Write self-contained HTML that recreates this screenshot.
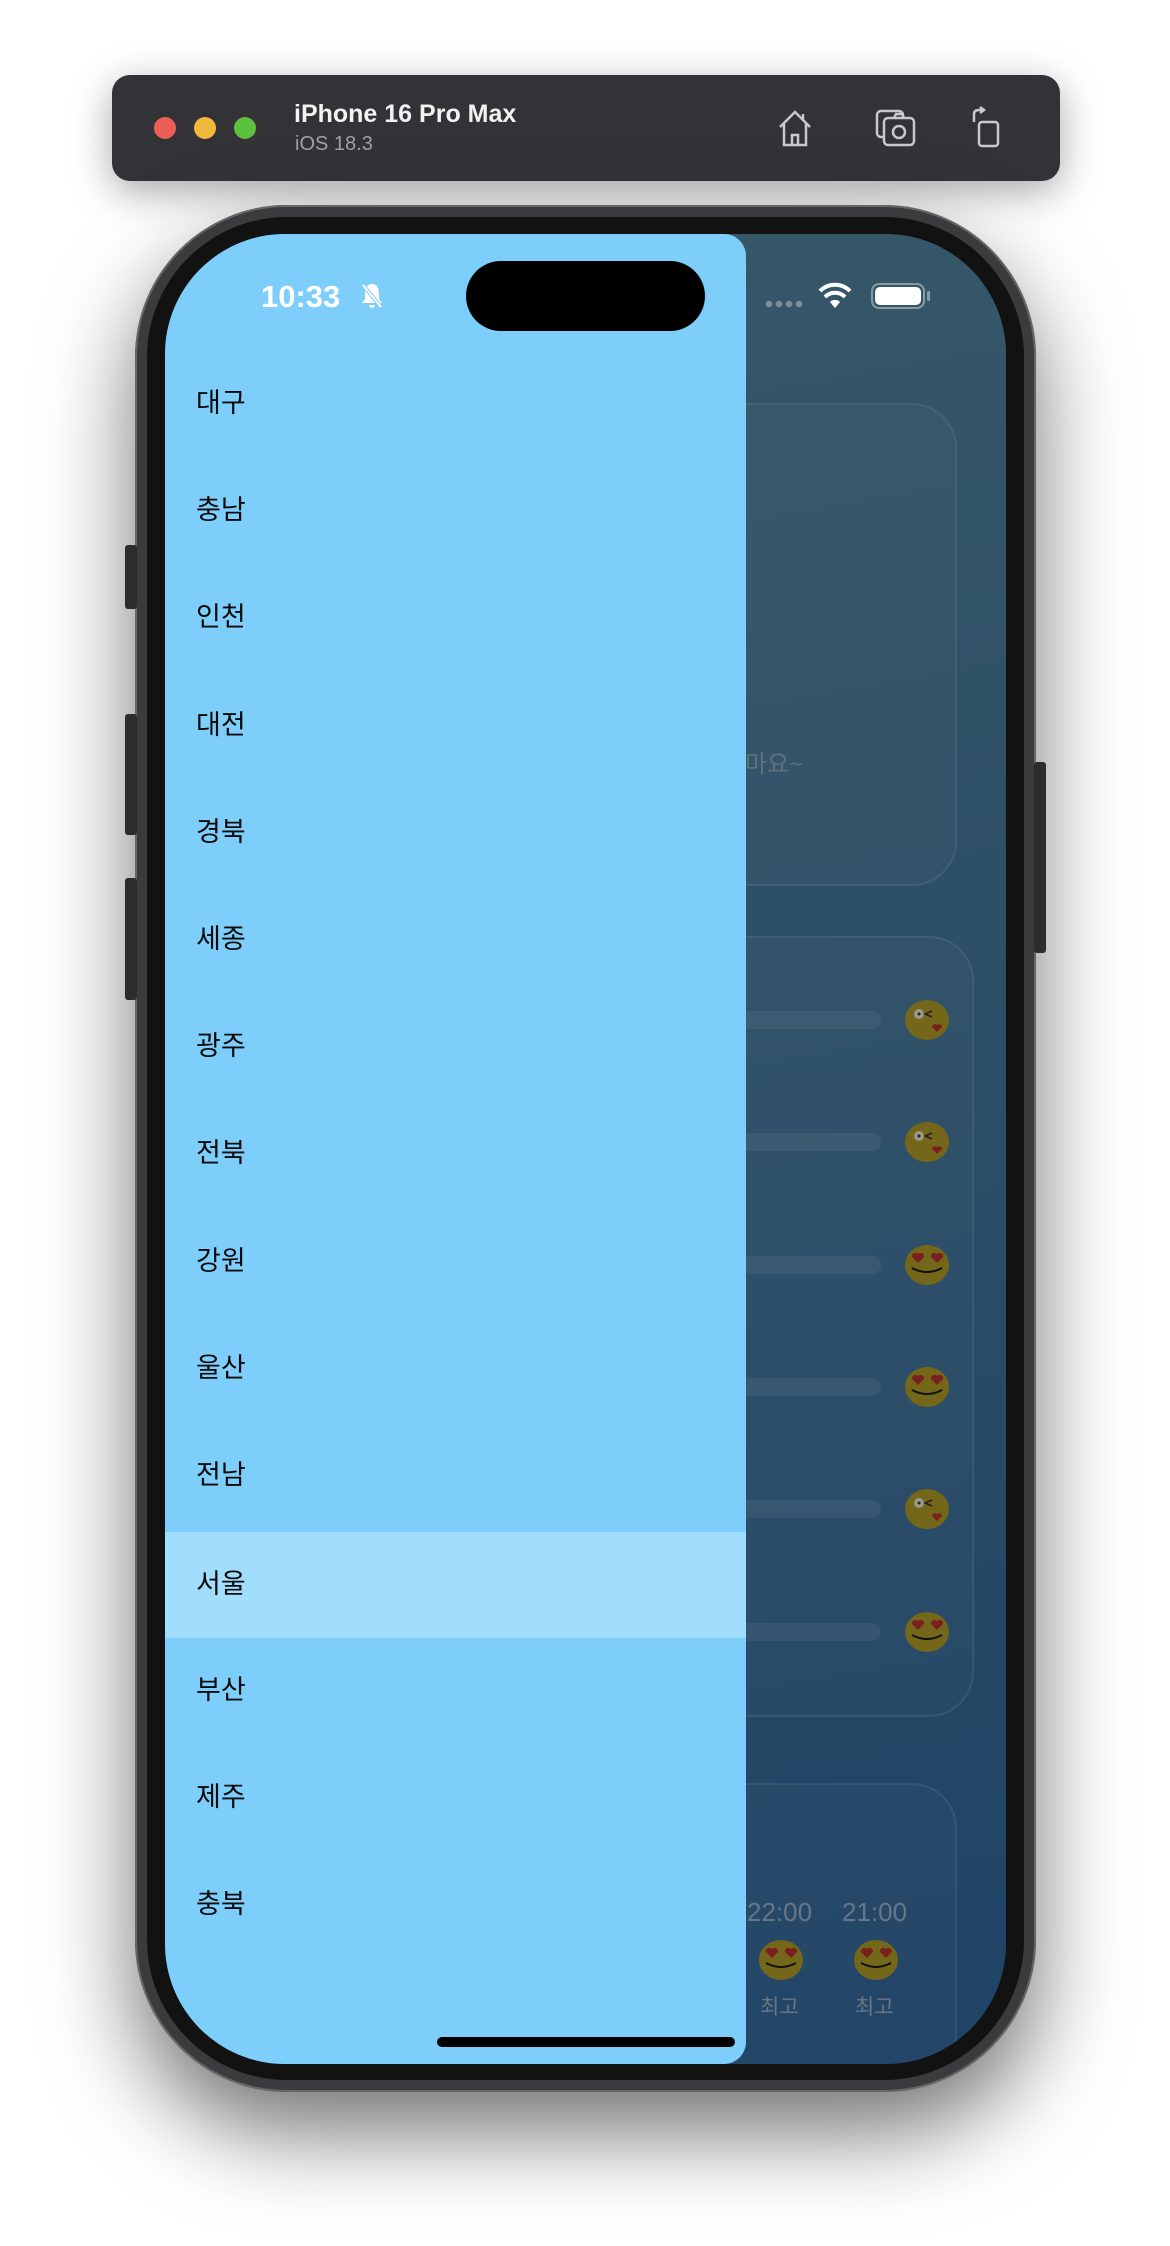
<!DOCTYPE html>
<html><head><meta charset="utf-8"><style>
*{margin:0;padding:0;box-sizing:border-box}
body{width:1170px;height:2246px;background:#fff;position:relative;overflow:hidden;font-family:"Liberation Sans","Noto Sans CJK KR",sans-serif}
.bar{position:absolute;left:112px;top:75px;width:948px;height:106px;background:#333237;border-radius:18px;box-shadow:0 10px 40px rgba(0,0,0,.35)}
.dot{position:absolute;top:117px;width:22px;height:22px;border-radius:50%}
.phone{position:absolute;left:135px;top:205px;width:901px;height:1887px;border-radius:152px;background:#3b3b3d;box-shadow:0 40px 90px rgba(0,0,0,.55),0 0 0 2px #666 inset}
.bezel{position:absolute;left:147px;top:217px;width:877px;height:1863px;border-radius:140px;background:#121212}
.screen{position:absolute;left:165px;top:234px;width:841px;height:1830px;border-radius:120px;overflow:hidden;background:linear-gradient(170deg,#375869 0%,#2c4e66 50%,#1f4366 100%)}
.card{position:absolute;border:2px solid rgba(255,255,255,.07);background:rgba(255,255,255,.02);border-radius:45px}
.drawer{position:absolute;left:0;top:0;width:581px;height:1830px;background:#7ecefb;border-radius:0 22px 22px 0}
.item{position:absolute;left:31px;font-size:27px;color:#0a0a0a;height:107px;line-height:107px;width:581px}
.bb{position:absolute;left:420px;width:296px;height:18px;border-radius:9px;background:rgba(255,255,255,.06)}
.g{position:absolute;color:#677784;font-size:26px}
.btn{position:absolute;background:#2c2c2e;border-radius:3px}
</style></head><body>
<div class="bar"></div>
<div class="dot" style="left:154px;background:#ec5f57"></div>
<div class="dot" style="left:194px;background:#f2b83b"></div>
<div class="dot" style="left:234px;background:#5bc13f"></div>
<div style="position:absolute;left:294px;top:100px;color:#f2f2f2;font-weight:bold;font-size:25px">iPhone 16 Pro Max</div>
<div style="position:absolute;left:295px;top:133px;color:#a0a0a4;font-size:20px">iOS 18.3</div>
<svg style="position:absolute;left:777px;top:108px" width="36" height="40" viewBox="0 0 36 40" fill="none" stroke="#c9c9cc" stroke-width="2.5"><path d="M3 19 L18 4 L33 19 M7 15 V37 H29 V15 M15 37 V27 H21 V37 M26 6 V12"/></svg>
<svg style="position:absolute;left:875px;top:108px" width="42" height="40" viewBox="0 0 42 40" fill="none" stroke="#c9c9cc" stroke-width="2.5"><rect x="2" y="3" width="26" height="26" rx="4"/><rect x="9" y="10" width="30" height="27" rx="4" fill="#333237"/><circle cx="24" cy="24" r="6"/><path d="M19 10 l2-4 h6 l2 4"/></svg>
<svg style="position:absolute;left:970px;top:106px" width="32" height="42" viewBox="0 0 32 42" fill="none" stroke="#c9c9cc" stroke-width="2.5"><rect x="9" y="16" width="19" height="24" rx="3"/><path d="M4 16 V8 Q4 4 9 4 H13 M10 1 l4 3 -4 3"/></svg>

<div class="phone"></div>
<div class="btn" style="left:125px;top:545px;width:12px;height:64px"></div>
<div class="btn" style="left:125px;top:714px;width:12px;height:121px"></div>
<div class="btn" style="left:125px;top:878px;width:12px;height:122px"></div>
<div class="btn" style="left:1034px;top:762px;width:12px;height:191px"></div>
<div class="bezel"></div>
<div class="screen">
  <div class="card" style="left:380px;top:169px;width:412px;height:483px"></div>
  <div class="g" style="left:580px;top:510px;font-size:24px;color:#5f717d">마요~</div>
  <div class="card" style="left:380px;top:702px;width:429px;height:781px"></div>
  <div class="bb" style="top:777px"></div>
  <div class="bb" style="top:899px"></div>
  <div class="bb" style="top:1022px"></div>
  <div class="bb" style="top:1144px"></div>
  <div class="bb" style="top:1266px"></div>
  <div class="bb" style="top:1389px"></div>
  <div class="card" style="left:380px;top:1549px;width:412px;height:400px"></div>
  <div class="g" style="left:582px;top:1663px">22:00</div>
  <div class="g" style="left:677px;top:1663px">21:00</div>
  <div class="g" style="left:595px;top:1757px;font-size:21px">최고</div>
  <div class="g" style="left:690px;top:1757px;font-size:21px">최고</div>
  <svg width="841" height="1830" style="position:absolute;left:0;top:0">
    <defs>
      <g id="k"><ellipse cx="0" cy="0" rx="22" ry="20" fill="#746719"/><circle cx="-8" cy="-6" r="5" fill="#9a9a8a"/><circle cx="-8" cy="-6" r="1.5" fill="#222"/><path d="M5-9 l-7 3 7 3" stroke="#222" stroke-width="1.5" fill="none"/><path d="M10 12 l-5-5 a3 3 0 0 1 5-2 a3 3 0 0 1 5 2z" fill="#7a2020"/></g>
      <g id="h"><ellipse cx="0" cy="0" rx="22" ry="20" fill="#746719"/><path d="M-9 -2 l-6-6 a3.5 3.5 0 0 1 6-3 a3.5 3.5 0 0 1 6 3z M10 -2 l-6-6 a3.5 3.5 0 0 1 6-3 a3.5 3.5 0 0 1 6 3z" fill="#7a2020"/><path d="M-15 3 Q0 11 15 3" stroke="#111" stroke-width="2" fill="none"/></g>
    </defs>
    <use href="#k" x="762" y="786"/><use href="#k" x="762" y="908"/>
    <use href="#h" x="762" y="1031"/><use href="#h" x="762" y="1153"/>
    <use href="#k" x="762" y="1275"/><use href="#h" x="762" y="1398"/>
    <use href="#h" x="616" y="1726"/><use href="#h" x="711" y="1726"/>
  </svg>
  <div class="drawer">
    <div style="position:absolute;left:0;top:1298px;width:581px;height:106px;background:#a1ddfc"></div>
    <div class="item" style="top:116px">대구</div>
    <div class="item" style="top:223px">충남</div>
    <div class="item" style="top:330px">인천</div>
    <div class="item" style="top:438px">대전</div>
    <div class="item" style="top:545px">경북</div>
    <div class="item" style="top:652px">세종</div>
    <div class="item" style="top:759px">광주</div>
    <div class="item" style="top:866px">전북</div>
    <div class="item" style="top:974px">강원</div>
    <div class="item" style="top:1081px">울산</div>
    <div class="item" style="top:1188px">전남</div>
    <div class="item" style="top:1297px">서울</div>
    <div class="item" style="top:1403px">부산</div>
    <div class="item" style="top:1510px">제주</div>
    <div class="item" style="top:1617px">충북</div>
  </div>
  <div style="position:absolute;left:301px;top:27px;width:239px;height:70px;border-radius:35px;background:#000"></div>
  <div style="position:absolute;left:96px;top:45px;color:#fff;font-size:31px;font-weight:bold">10:33</div>
  <svg style="position:absolute;left:195px;top:48px" width="24" height="28" viewBox="0 0 24 28"><path d="M12 2 C6 2 5 8 5 12 V17 L2 21 H22 L19 17 V12 C19 8 18 2 12 2Z M9 23 a3 3 0 0 0 6 0z" fill="#fff"/><path d="M3 3 L21 25" stroke="#7ecefb" stroke-width="4"/><path d="M3 3 L21 25" stroke="#fff" stroke-width="2"/></svg>
  <div style="position:absolute;left:599px;top:66px;width:40px;height:8px;background:radial-gradient(circle,#7a8c98 3px,transparent 3.5px) 0 0/10px 8px"></div>
  <svg style="position:absolute;left:653px;top:48px" width="34" height="28" viewBox="0 0 34 28"><path d="M17 26 L12 20 A7 7 0 0 1 22 20Z" fill="#fff"/><path d="M7 15 A14 14 0 0 1 27 15" stroke="#fff" stroke-width="4" fill="none"/><path d="M2 9 A21 21 0 0 1 32 9" stroke="#fff" stroke-width="4" fill="none"/></svg>
  <div style="position:absolute;left:706px;top:49px;width:54px;height:26px;border-radius:8px;border:2px solid #8a9aa5;padding:2px"><div style="width:100%;height:100%;background:#fff;border-radius:5px"></div></div>
  <div style="position:absolute;left:762px;top:57px;width:3px;height:10px;background:#8a9aa5;border-radius:2px"></div>
  <div style="position:absolute;left:272px;top:1803px;width:298px;height:10px;border-radius:5px;background:#000"></div>
</div>
</body></html>
